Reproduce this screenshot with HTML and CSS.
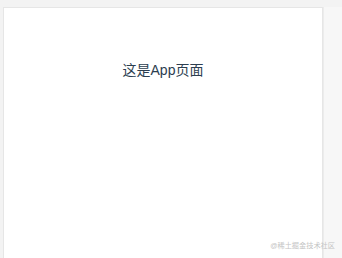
FILE: index.html
```html
<!DOCTYPE html>
<html lang="zh-CN">
<head>
   <meta charset="UTF-8"><title>App</title>
   <link rel="stylesheet" href="styles.css">
</head> <body>

<div class="shell">
   <section class="page">
      <p class="title">这是App页面</p>
   </section>
   <aside class="side"></aside>
</div>

<span class="mark">@稀土掘金技术社区</span>

</body> </html>
```

FILE: styles.css
```css
html, body {
   margin: 0;
   height: 100%;
}

body {
   background: #f3f3f3;
   font-family: "Liberation Sans", "Noto Sans CJK SC", sans-serif;
   overflow: hidden;
}

.shell {
   display: flex;
   height: 100%;
   padding: 7px 0 0 3px;
   box-sizing: border-box;
}

.page {
   width: 320px;
   background: #fff;
   border: 1px solid #e6e6e6;
   border-bottom: none;
   box-sizing: border-box;
   text-align: center;
}

.title {
   margin: 52px 0 0;
   font-size: 14px;
   line-height: 20px;
   color: #2c3e50;
}

.side {
   flex: 1;
   background: #f7f7f7;
   border-left: 1px solid #ececec;
}

.mark {
   position: absolute;
   right: 7px;
   bottom: 8px;
   font-size: 7.2px;
   line-height: 9px;
   color: #c4c4c4;
}
```
